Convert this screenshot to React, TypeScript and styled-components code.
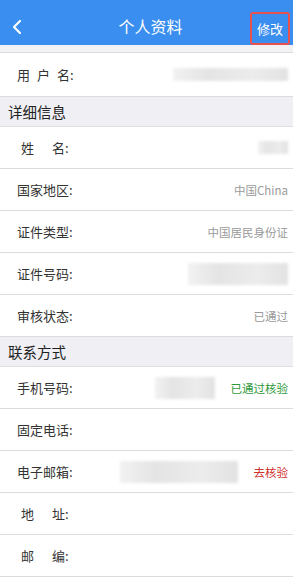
import styled, { createGlobalStyle } from 'styled-components';

const GlobalStyle = createGlobalStyle`
  html, body {
    margin: 0;
    padding: 0;
    background: #ffffff;
  }
  body {
    font-family: "Noto Sans CJK SC", "Noto Sans", sans-serif;
  }
`;

type Field = {
  label: string;
  value?: string;
  tone?: 'muted' | 'ok' | 'warn';
  blur?: number;
  blurTall?: boolean;
};

const detailFields: Field[] = [
  { label: '姓名', blur: 30 },
  { label: '国家地区', value: '中国China', tone: 'muted' },
  { label: '证件类型', value: '中国居民身份证', tone: 'muted' },
  { label: '证件号码', blur: 100, blurTall: true },
  { label: '审核状态', value: '已通过', tone: 'muted' },
];

const contactFields: Field[] = [
  { label: '手机号码', blur: 60, blurTall: true, value: '已通过核验', tone: 'ok' },
  { label: '固定电话' },
  { label: '电子邮箱', blur: 118, blurTall: true, value: '去核验', tone: 'warn' },
  { label: '地址' },
  { label: '邮编' },
];

const toneColor = {
  muted: '#9a9a9a',
  ok: '#2f9a3c',
  warn: '#d0302c',
};

// short labels are spread out to line up with the four-character ones
const labelGap = (len: number) => (len === 2 ? 18 : len === 3 ? 7 : 0);

const FieldLabel = ({ text }: { text: string }) => {
  const chars = text.split('');
  return (
    <Label $gap={labelGap(chars.length)} $indent={chars.length === 2 ? 4 : 0}>
      {chars.map((c, i) => (
        <span key={i}>
          {c}
          {i === chars.length - 1 && ':'}
        </span>
      ))}
    </Label>
  );
};

const Row = ({ field, tall }: { field: Field; tall?: boolean }) => (
  <RowBox $tall={tall}>
    <FieldLabel text={field.label} />
    <RowRight>
      {field.blur && <Blur $width={field.blur} $tall={field.blurTall} />}
      {field.value && <Value $tone={field.tone || 'muted'}>{field.value}</Value>}
    </RowRight>
  </RowBox>
);

const App = () => {
  return (
    <Page>
      <GlobalStyle />
      <NavBar>
        <BackButton>
          <svg width="12" height="16" viewBox="0 0 12 16">
            <polyline
              points="9,2 3,8 9,14"
              fill="none"
              stroke="#ffffff"
              strokeWidth="2.2"
              strokeLinecap="round"
              strokeLinejoin="round"
            />
          </svg>
        </BackButton>
        <Title>个人资料</Title>
        <EditButton>修改</EditButton>
      </NavBar>

      <Spacer />

      <Row field={{ label: '用户名', blur: 115 }} tall />

      <SectionHeader>详细信息</SectionHeader>
      {detailFields.map((f) => (
        <Row key={f.label} field={f} />
      ))}

      <SectionHeader>联系方式</SectionHeader>
      {contactFields.map((f) => (
        <Row key={f.label} field={f} />
      ))}
    </Page>
  );
};

export default App;

const Page = styled.div`
  width: 293px;
  height: 577px;
  overflow: hidden;
  background: #ffffff;
`;

const NavBar = styled.header`
  height: 45px;
  padding-top: 11px;
  box-sizing: border-box;
  background: #3a8ef0;
  display: flex;
  align-items: center;
`;

const BackButton = styled.div`
  width: 40px;
  padding-left: 11px;
  display: flex;
  align-items: center;
  margin-top: -2px;
`;

const Title = styled.h1`
  flex: 1;
  margin: -4px 0 0;
  text-align: center;
  color: #ffffff;
  font-size: 16px;
  font-weight: 400;
`;

const EditButton = styled.div`
  width: 36px;
  height: 29px;
  margin: 1px 3px 0 0;
  align-self: flex-start;
  border: 2px solid #e8514e;
  border-radius: 3px;
  display: flex;
  align-items: center;
  justify-content: center;
  color: #ffffff;
  font-size: 13px;
`;

const Spacer = styled.div`
  height: 7px;
  background: #f2f2f4;
  border-bottom: 1px solid #dcdcdc;
`;

const SectionHeader = styled.div`
  height: 29px;
  background: #efeff4;
  border-bottom: 1px solid #dedede;
  padding-left: 8px;
  display: flex;
  align-items: center;
  font-size: 14.5px;
  color: #222222;
`;

const RowBox = styled.div<{ $tall?: boolean }>`
  height: ${(p) => (p.$tall ? 43 : 41)}px;
  border-bottom: 1px solid #dcdcdc;
  display: flex;
  align-items: center;
  padding: 0 5px 0 17px;
`;

const Label = styled.div<{ $gap: number; $indent: number }>`
  display: flex;
  gap: ${(p) => p.$gap}px;
  padding-left: ${(p) => p.$indent}px;
  font-size: 13px;
  color: #333333;
  white-space: nowrap;
`;

const RowRight = styled.div`
  flex: 1;
  display: flex;
  align-items: center;
  justify-content: flex-end;
  gap: 16px;
`;

const Blur = styled.div<{ $width: number; $tall?: boolean }>`
  width: ${(p) => p.$width}px;
  height: ${(p) => (p.$tall ? 22 : 13)}px;
  background: linear-gradient(90deg, #f2f2f2, #e4e4e4 30%, #ececec 70%, #e2e2e2);
  filter: blur(1.5px);
`;

const Value = styled.span<{ $tone: 'muted' | 'ok' | 'warn' }>`
  font-size: 11.5px;
  color: ${(p) => toneColor[p.$tone]};
  white-space: nowrap;
`;
